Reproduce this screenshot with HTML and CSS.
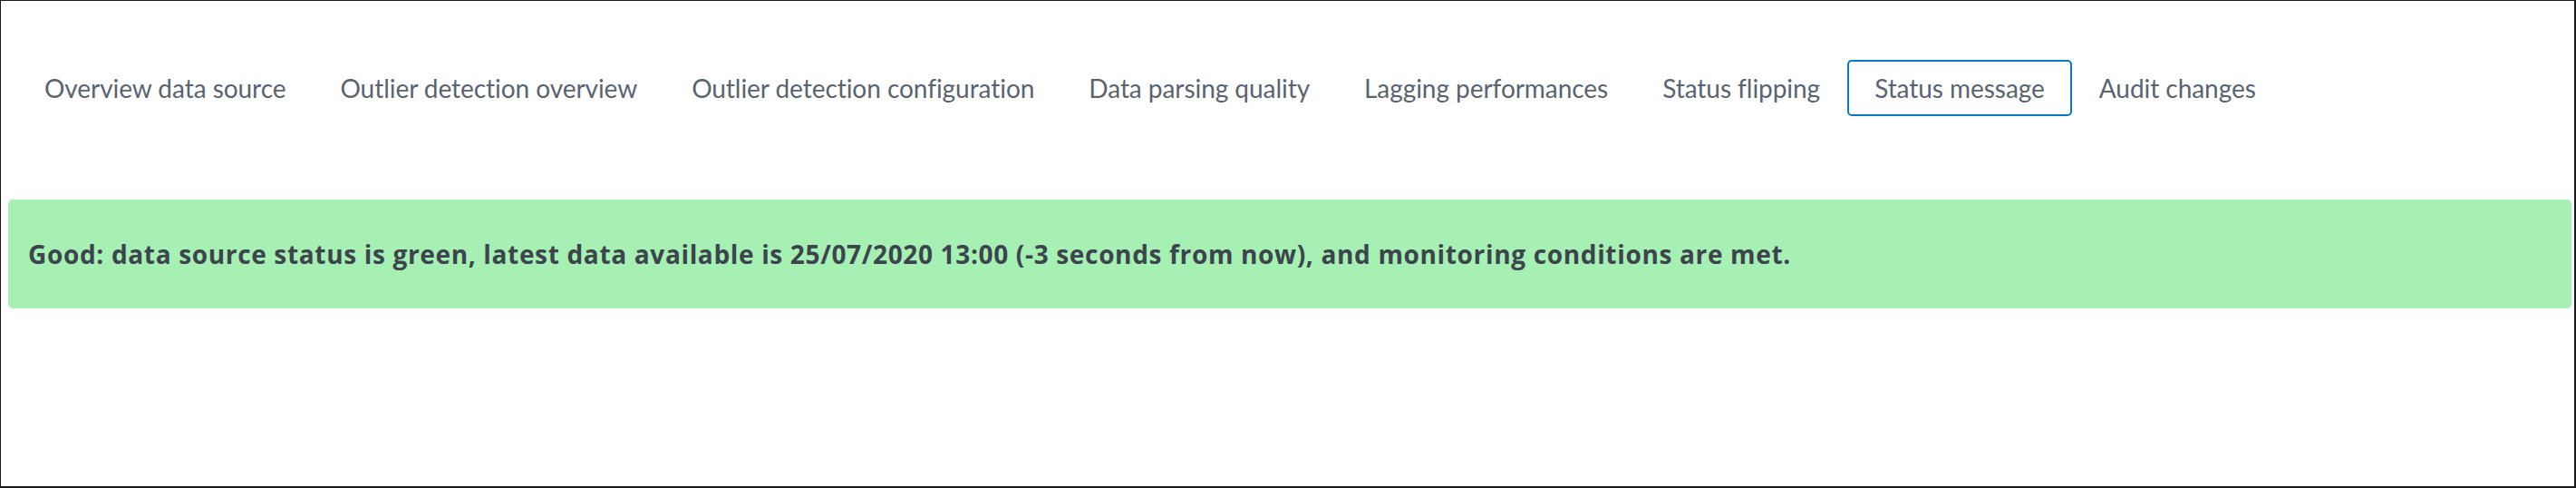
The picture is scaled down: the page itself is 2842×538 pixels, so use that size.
FILE: index.html
```html
<!DOCTYPE html>
<html>
<head>
<meta charset="utf-8">
<title>Status message</title>
<link rel="stylesheet" href="styles.css">
</head>
<body>
<div class="frame">
  <nav class="tabs">
    <a class="tab">Overview data source</a>
    <a class="tab">Outlier detection overview</a>
    <a class="tab">Outlier detection configuration</a>
    <a class="tab">Data parsing quality</a>
    <a class="tab">Lagging performances</a>
    <a class="tab">Status flipping</a>
    <a class="tab tab-active">Status message</a>
    <a class="tab">Audit changes</a>
  </nav>
  <div class="alert-good">Good: data source status is green, latest data available is 25/07/2020 13:00 (-3 seconds from now), and monitoring conditions are met.</div>
</div>
</body>
</html>
```
FILE: styles.css
```css
html, body {
  margin: 0;
  padding: 0;
  background: #ffffff;
}

.frame {
  box-sizing: border-box;
  width: 2842px;
  height: 538px;
  border-style: solid;
  border-color: #1a1a1a;
  border-width: 1px 2px 2px 1px;
  padding: 65px 3px 0 8px;
  display: flex;
  flex-direction: column;
  gap: 92px;
}

.tabs {
  display: flex;
  padding-left: 10px;
}

.tab {
  font-family: "Lato", "Liberation Sans", sans-serif;
  font-size: 28px;
  line-height: 34px;
  letter-spacing: -0.05px;
  color: #5a6470;
  padding: 12px 28px;
  border: 2px solid transparent;
  border-radius: 5px;
  white-space: nowrap;
}

.tab-active {
  border-color: #0c77c2;
}

.alert-good {
  box-sizing: border-box;
  height: 120px;
  display: flex;
  align-items: center;
  padding: 0 22px;
  background: #a7f0b3;
  border-radius: 5px;
  font-family: "Open Sans", "Liberation Sans", sans-serif;
  font-weight: 700;
  font-size: 28px;
  letter-spacing: 0.66px;
  color: #3c444d;
  white-space: nowrap;
}
```
